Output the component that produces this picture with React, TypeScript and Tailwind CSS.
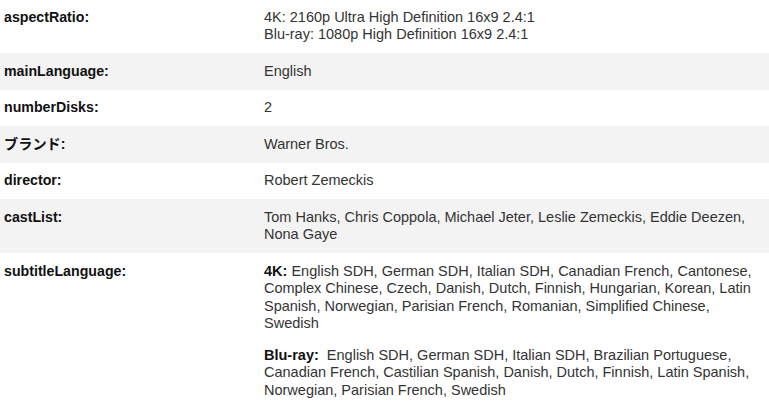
import React from "react";

export default function App() {
  const font = { fontFamily: '"Liberation Sans", Arial, "Noto Sans CJK JP", sans-serif' };
  const Row = ({ k, children, gray }: { k: string; children: React.ReactNode; gray?: boolean }) => (
    <div className={`grid grid-cols-[258px_1fr] ${gray ? "bg-[#f3f3f3]" : "bg-white"}`}>
      <div className="pl-[4px] py-[9.5px] font-bold text-[#111] text-[14.2px]">{k}</div>
      <div className="pl-[6px] pr-[14px] py-[9.5px] text-[#333]">{children}</div>
    </div>
  );
  return (
    <div style={font} className="w-[769px] h-[402px] overflow-hidden bg-white text-[14.5px] leading-[17.5px]">
      <div className="-mt-[1px]">
        <Row k="aspectRatio:">
          <div>4K: 2160p Ultra High Definition 16x9 2.4:1</div>
          <div>Blu-ray: 1080p High Definition 16x9 2.4:1</div>
        </Row>
        <Row k="mainLanguage:" gray>English</Row>
        <Row k="numberDisks:">2</Row>
        <Row k="ブランド:" gray>Warner Bros.</Row>
        <Row k="director:">Robert Zemeckis</Row>
        <Row k="castList:" gray>
          Tom Hanks, Chris Coppola, Michael Jeter, Leslie Zemeckis, Eddie Deezen, Nona Gaye
        </Row>
        <Row k="subtitleLanguage:">
          <p className="mb-[14px]">
            <b className="text-[#111]">4K:</b> English SDH, German SDH, Italian SDH, Canadian French, Cantonese, Complex
            Chinese, Czech, Danish, Dutch, Finnish, Hungarian, Korean, Latin Spanish, Norwegian, Parisian French,
            Romanian, Simplified Chinese, Swedish
          </p>
          <p>
            <b className="text-[#111]">Blu-ray:</b>&nbsp; English SDH, German SDH, Italian SDH, Brazilian Portuguese,
            Canadian French, Castilian Spanish, Danish, Dutch, Finnish, Latin Spanish, Norwegian, Parisian French,
            Swedish
          </p>
        </Row>
      </div>
    </div>
  );
}
